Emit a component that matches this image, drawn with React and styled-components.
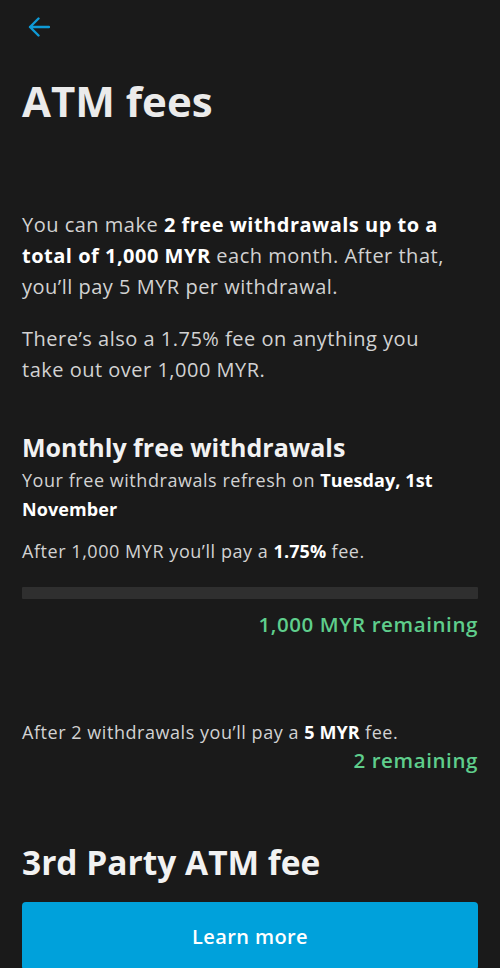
import React from 'react';
import styled, { createGlobalStyle } from 'styled-components';

const GlobalStyle = createGlobalStyle`
  html, body {
    margin: 0;
    padding: 0;
    background: #1a1a1a;
  }
  body {
    font-family: "Open Sans", "Noto Sans", sans-serif;
    color: #e6e6e6;
  }
`;

const Page = styled.div`
  width: 500px;
  height: 968px;
  overflow: hidden;
  box-sizing: border-box;
  padding: 0 22px;
  background: #1a1a1a;
`;

const BackButton = styled.button`
  display: block;
  background: none;
  border: 0;
  padding: 0;
  margin: 17px 0 0 6px;
  width: 22px;
  height: 20px;
  color: #0f9ad6;
  cursor: pointer;
`;

const Title = styled.h1`
  margin: 39px 0 0;
  font-size: 42px;
  line-height: 50px;
  font-weight: 700;
  color: #ebebeb;
`;

const Paragraph = styled.p`
  margin: ${({ $top }) => $top || 0}px 0 0;
  padding-right: 20px;
  font-size: 20px;
  line-height: 31px;
  letter-spacing: 0.5px;
  color: #d2d2d2;

  strong {
    color: #ffffff;
    font-weight: 700;
  }
`;

const SectionTitle = styled.h2`
  margin: ${({ $top }) => $top}px 0 0;
  font-size: ${({ $size }) => $size}px;
  line-height: 1.25;
  font-weight: 700;
  color: #f2f2f2;
`;

const Note = styled.p`
  margin: ${({ $top }) => $top || 0}px 0 0;
  font-size: 18px;
  line-height: 29px;
  letter-spacing: 0.55px;
  color: #d2d2d2;

  strong {
    color: #ffffff;
    font-weight: 700;
    letter-spacing: 0.1px;
  }
`;

const Track = styled.div`
  margin-top: 21px;
  height: 12px;
  background: #2f2f2f;
  border-radius: 1px;
  overflow: hidden;
`;

const Fill = styled.div`
  height: 100%;
  background: #5fce8c;
`;

const Remaining = styled.div`
  margin-top: ${({ $top }) => $top}px;
  text-align: right;
  font-size: 20.5px;
  line-height: 28px;
  letter-spacing: 0.6px;
  font-weight: 600;
  color: #5fce8c;
`;

const PrimaryButton = styled.button`
  display: block;
  width: 100%;
  margin-top: 18px;
  height: 68px;
  border: 0;
  border-radius: 4px;
  background: #00a1db;
  color: #ffffff;
  font-family: inherit;
  font-size: 20px;
  letter-spacing: 0.4px;
  font-weight: 600;
  cursor: pointer;
`;

function ArrowLeft() {
  return (
    <svg width="22" height="20" viewBox="0 0 22 20" fill="none">
      <path
        d="M21 10H2M10.5 1.5L2 10l8.5 8.5"
        stroke="currentColor"
        strokeWidth="2.4"
        strokeLinecap="round"
        strokeLinejoin="round"
      />
    </svg>
  );
}

export default function App() {
  const used = 0;
  return (
    <>
      <GlobalStyle />
      <Page>
        <BackButton aria-label="Back">
          <ArrowLeft />
        </BackButton>
        <Title>ATM fees</Title>

        <Paragraph $top={83}>
          You can make <strong>2 free withdrawals up to a total of 1,000 MYR</strong>{' '}
          each month. After that, you’ll pay 5 MYR per withdrawal.
        </Paragraph>
        <Paragraph $top={21}>
          There’s also a 1.75% fee on anything you take out over 1,000 MYR.
        </Paragraph>

        <SectionTitle $top={47} $size={25}>
          Monthly free withdrawals
        </SectionTitle>
        <Note $top={3}>
          Your free withdrawals refresh on <strong>Tuesday, 1st November</strong>
        </Note>
        <Note $top={13}>
          After 1,000 MYR you’ll pay a <strong>1.75%</strong> fee.
        </Note>
        <Track>
          <Fill style={{ width: `${used}%` }} />
        </Track>
        <Remaining $top={11}>1,000 MYR remaining</Remaining>

        <Note $top={80}>
          After 2 withdrawals you’ll pay a <strong>5 MYR</strong> fee.
        </Note>
        <Remaining $top={-1}>2 remaining</Remaining>

        <SectionTitle $top={68} $size={33.5}>
          3rd Party ATM fee
        </SectionTitle>
        <PrimaryButton>Learn more</PrimaryButton>
      </Page>
    </>
  );
}
